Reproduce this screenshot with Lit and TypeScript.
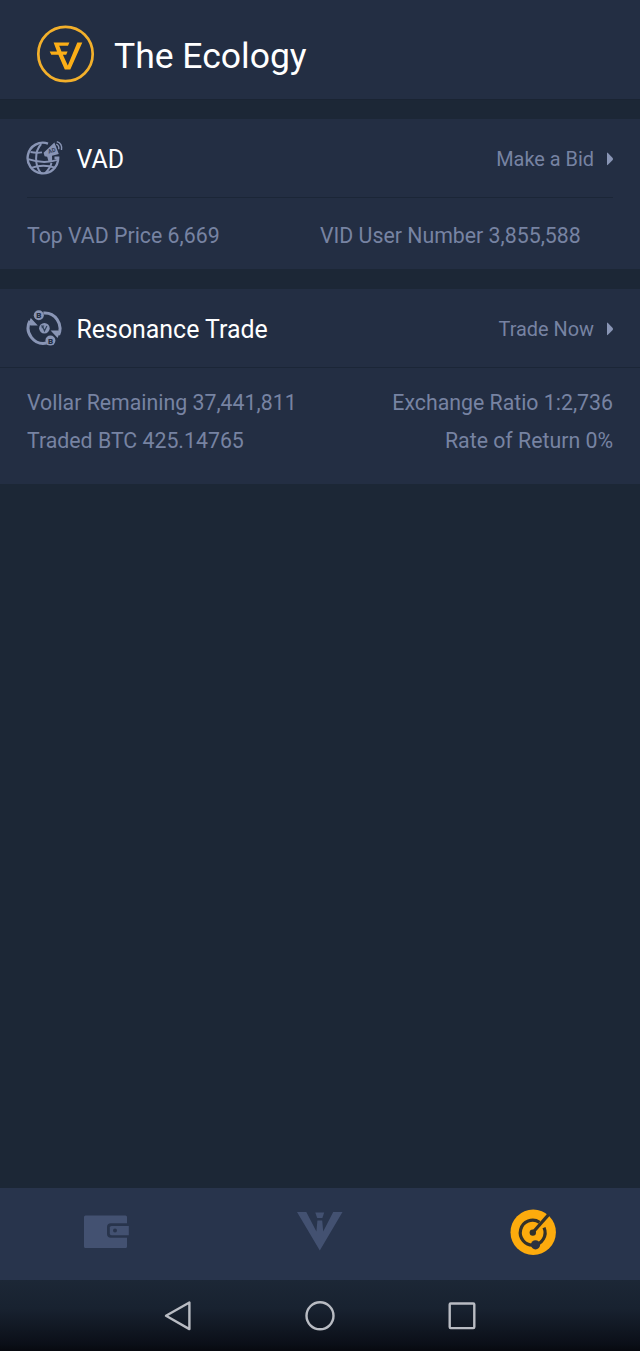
import { LitElement, html, css, svg } from "lit";
import { customElement } from "lit/decorators.js";

const brand = svg`<svg class="brand" width="60" height="60" viewBox="0 0 60 60" fill="none">
  <circle cx="30.5" cy="29" r="27.2" stroke="#f3b02b" stroke-width="2.7"/>
  <path d="M18.6 17.4H34.4L33 20.8H24.2L26.5 26.4H32.6L31.2 29.7H27.9L32.8 40.6L42.3 17.4H47.3L35.3 44.6H29.8L23.4 29.7H16.3L14.7 26.4H22Z" fill="#fbae17"/></svg>`;

const globe = svg`<svg width="38" height="38" viewBox="0 0 38 38" fill="none" stroke="#8995b5" stroke-width="2.4">
  <path d="M22 4.6A15.3 15.3 0 1 0 32.2 18.7H28.5"/>
  <path d="M15.2 5C8.4 12 8.4 27 15.2 34.4M19 34.4C24 29 25.2 26 25.4 23.8" stroke-width="2"/>
  <path d="M4.5 13Q10 14.2 16 13.4M2.2 20.2Q18 25.6 32.2 20.6M5.4 28.8Q17 24.8 29.8 28.8" stroke-width="1.9"/>
  <path d="M17.6 13.8L28.4 3.4L32.8 15L26 16.8L26.2 22H22.4L21.2 17.7L18.6 17.3Z" fill="#8995b5" stroke="none"/>
  <path d="M30.3 5.2Q33.2 6.4 32.8 10.2M30.8 2.6Q36.6 4.4 35.5 11" stroke-width="1.4"/>
  <text x="22" y="13.9" font-family="Roboto" font-size="5.8" font-weight="700" fill="#34415c" stroke="none" transform="rotate(-18 25 12)">AD</text>
</svg>`;

const trade = svg`<svg width="38" height="38" viewBox="0 0 38 38" fill="none">
  <path d="M3.8 12A15.4 15.4 0 0 0 20.7 34M17.4 4.1A15.4 15.4 0 0 1 32.6 25.8" stroke="#8995b5" stroke-width="3"/>
  <path d="M4.8 9L11.8 16.4H4.4L2.6 14ZM24.6 21.4H32L34 23L31.6 29Z" fill="#8995b5"/>
  <g fill="#8995b5"><circle cx="12.8" cy="6.3" r="5"/><circle cx="18.4" cy="19.2" r="5.3"/><circle cx="24.4" cy="31.6" r="5"/></g>
  <g fill="#232e43" font-family="Roboto" font-size="8" font-weight="900" text-anchor="middle">
    <text x="12.9" y="9.2">B</text><text x="24.5" y="34.5">B</text></g>
  <path d="M15 17H18.2M15.7 18.7H17.8M16.5 17.2L18.5 21.8L20.9 17" stroke="#30415a" stroke-width="1.2"/>
</svg>`;

const wallet = svg`<svg width="46" height="36" viewBox="0 0 46 36">
  <path d="M1.5 1.5H41.5Q43 1.5 43 3V9.2H27Q23 9.2 23 13.2V19.8Q23 23.8 27 23.8H43V32.5Q43 34 41.5 34H1.5Q0 34 0 32.5V3Q0 1.5 1.5 1.5Z" fill="#435171"/>
  <path d="M27.5 11.9H44.8V21.2H27.5Q25.8 21.2 25.8 19.5V13.6Q25.8 11.9 27.5 11.9Z" fill="#435171"/>
  <circle cx="31" cy="16.6" r="2" fill="#28344c"/></svg>`;

const vid = svg`<svg class="vid" width="46" height="40" viewBox="0 0 46 40" fill="#435171">
  <path d="M0 1H9.3L19.4 20.5L20.4 9.5H25.2L26.2 20.5L36.2 1H45.5L22.8 39.6Z"/>
  <path d="M18.3 1.4H27.2L25.4 7H20.2Z"/></svg>`;

const radar = svg`<svg width="46" height="46" viewBox="0 0 46 46" fill="none">
  <circle cx="23.2" cy="23.2" r="22.7" fill="#fdab0d"/>
  <path d="M29.5 13.3A12.4 12.4 0 1 0 34 18.6" stroke="#33312b" stroke-width="3.2"/>
  <path d="M22.8 23.5L38.6 5.6" stroke="#33312b" stroke-width="3.2"/>
  <circle cx="22.8" cy="23.6" r="3.2" fill="#33312b"/><circle cx="25.5" cy="35.8" r="4.6" fill="#2d3340"/></svg>`;

const arrow = svg`<svg class="arrow" width="8" height="14" viewBox="0 0 8 14"><path d="M1 1Q1 .2 1.9 .9L6.7 6.1Q7.4 7 6.7 7.9L1.9 12.8Q1 13.6 1 12.8Z" fill="#8995b5"/></svg>`;

@customElement("app-root")
export class AppRoot extends LitElement {
  static styles = css`
    :host { display: flex; flex-direction: column; height: 1351px; overflow: hidden;
      background: #1c2736; color: #fff; font-family: Roboto, sans-serif; }
    * { box-sizing: border-box; }
    svg { display: block; flex: none; }
    header { height: 100px; background: #232e43; border-bottom: 1px solid #1a2433; display: flex;
      align-items: center; padding: 10px 0 0 35px; }
    .brand { margin-right: 19px; }
    h1 { margin: 2px 0 0; font-weight: 400; font-size: 35.5px; line-height: 42px; white-space: nowrap; }
    section { background: #232e43; margin-top: 20px; }
    .vad { height: 150px; margin-top: 19px; }
    .trade { height: 195px; }
    .head { height: 79px; display: flex; align-items: center; border-bottom: 1px solid #1b2637; }
    .vad .head { margin: 0 27px; }
    .trade .head { padding: 0 27px; }
    .head svg:first-child { margin-left: -1px; margin-right: 12.5px; }
    h2 { margin: 3px 0 0; font-weight: 400; font-size: 24.9px; line-height: 30px; flex: 1; }
    .link { color: #7783a2; font-size: 19.9px; line-height: 26px; margin-top: 3px; }
    .arrow { margin: 1px -1px 0 12px; }
    .row { display: flex; color: #7783a2; font-size: 21.3px; line-height: 38px; padding: 0 27px;
      justify-content: space-between; white-space: nowrap; }
    .vad .row { padding-top: 19px; }
    .vad .row span { flex: 1; }
    .rows { padding-top: 16px; }
    .tabs { margin-top: auto; height: 92px; background: #28344c; display: grid;
      grid-template-columns: repeat(3, 1fr); place-items: center; padding-bottom: 5px; }
    .vid { margin-bottom: 2px; }
    .system { height: 71px; display: flex; justify-content: center; align-items: center; gap: 112px;
      background: linear-gradient(#1c2736 0%, #182230 40%, #0b0f18 90%, #07090f 100%); }
  `;

  render() {
    return html`
      <header>${brand}<h1>The Ecology</h1></header>
      <section class="vad">
        <div class="head">${globe}<h2>VAD</h2><span class="link">Make a Bid</span>${arrow}</div>
        <div class="row"><span>Top VAD Price 6,669</span><span>VID User Number 3,855,588</span></div>
      </section>
      <section class="trade">
        <div class="head">${trade}<h2>Resonance Trade</h2><span class="link">Trade Now</span>${arrow}</div>
        <div class="rows">
          <div class="row"><span>Vollar Remaining 37,441,811</span><span>Exchange Ratio 1:2,736</span></div>
          <div class="row"><span>Traded BTC 425.14765</span><span>Rate of Return 0%</span></div>
        </div>
      </section>
      <nav class="tabs">${wallet}${vid}${radar}</nav>
      <div class="system">
        <svg width="30" height="32" viewBox="0 0 30 32" fill="none" stroke="#b9bcc3" stroke-width="2.4" stroke-linejoin="round"><path d="M3 15.8L26.4 2.5V29.1Z"/></svg>
        <svg width="30" height="30" viewBox="0 0 30 30" fill="none" stroke="#b9bcc3" stroke-width="2.4"><circle cx="15" cy="14.8" r="13.5"/></svg>
        <svg width="30" height="30" viewBox="0 0 30 30" fill="none" stroke="#b9bcc3" stroke-width="2.4"><rect x="2.7" y="2.5" width="24.6" height="24.6" rx="1"/></svg>
      </div>`;
  }
}
